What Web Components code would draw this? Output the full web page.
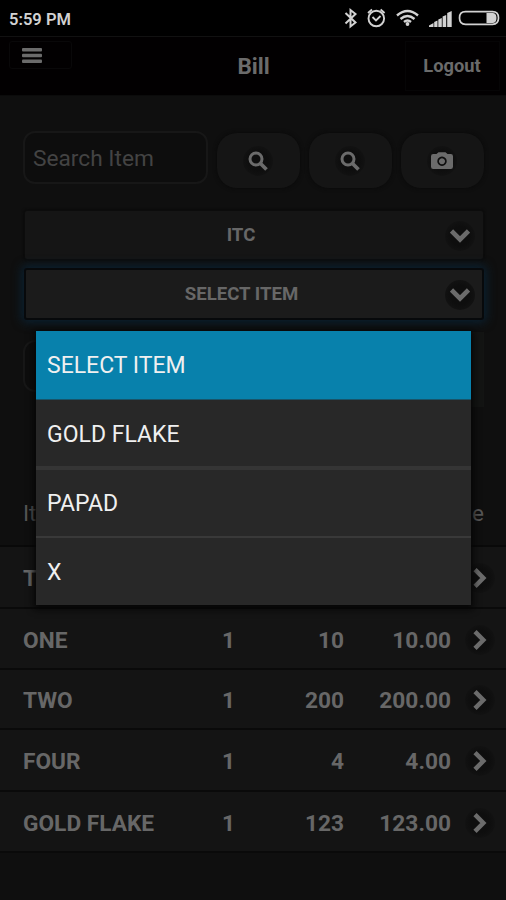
<!DOCTYPE html>
<html lang="en"><head><meta charset="utf-8"><title>Bill</title>
<style>html,body{margin:0;background:#0f0f0f}body{width:506px;height:900px;overflow:hidden;font-family:Roboto,"Liberation Sans",sans-serif}</style></head>
<body><bill-app></bill-app>
<script>
const define=(name,html)=>customElements.define(name,class extends HTMLElement{
  constructor(){super();this.attachShadow({mode:'open'}).innerHTML=html}
});

const icons={
 search:'<svg width="20" height="20" viewBox="0 0 20 20" fill="none" stroke="currentColor"><circle cx="8" cy="8" r="6" stroke-width="3"/><path d="M12 12l6.500 6.500" stroke-width="3.700"/></svg>',
 camera:'<svg width="22" height="18" viewBox="0 0 22 18"><path fill="currentColor" fill-rule="evenodd" d="M2.200 2H5.500L7.500.3h7L16.500 2h3.300Q22 2 22 4.200v10.600Q22 17 19.800 17H2.200Q0 17 0 14.800V4.200Q0 2 2.200 2zM11 4.500a4.700 4.700 0 1 0 .01 0zM11 6.200a3 3 0 1 1-.01 0z"/></svg>',
 down:'<svg width="20" height="14" viewBox="0 0 20 14"><path d="M1.500 2l8.500 8.500L18.500 2" fill="none" stroke="currentColor" stroke-width="4.600"/></svg>',
 right:'<svg width="14" height="20" viewBox="0 0 14 20"><path d="M2 1.700L10.300 10L2 18.300" fill="none" stroke="currentColor" stroke-width="4.500"/></svg>'
};

customElements.define('glyph-disc',class extends HTMLElement{
  connectedCallback(){
    if(this.shadowRoot)return;
    this.attachShadow({mode:'open'}).innerHTML=`<style>:host{display:grid;place-items:center;width:30px;height:30px;border-radius:50%;background:radial-gradient(circle,#0e0e0e 45%,#121212 72%);color:#6b6b6b}svg{display:block}</style>${icons[this.getAttribute('name')]}`;
  }
});

define('status-bar',`<style>
:host{display:flex;box-sizing:border-box;height:37px;padding:0 6px 0 9px;background:#000;border-bottom:1px solid #111;justify-content:space-between;align-items:center;color:#d2d2d2}
b{font-size:16.500px;font-weight:600;line-height:20px;padding-top:3px}svg{display:block}</style>
<b>5:59 PM</b>
<svg width="156" height="24" viewBox="344 6 156 24" fill="none" stroke="currentColor">
<path d="M345.500 13l10 9.500-5 4V10l5 4-10 9.500" stroke-width="2"/>
<circle cx="376.300" cy="18.500" r="7.800" stroke-width="1.900"/><path d="M372.500 17l3.500 3.500 4.500-4.500M368 13l4-3.500M384.600 13l-4-3.500" stroke-width="1.800"/>
<path d="M397 15.500q10.500-9 21 0M400.500 19q7-6 14 0M404 22q3.500-3 7 0" stroke-width="2.400"/><circle cx="407.500" cy="24" r="1.900" fill="currentColor" stroke="none"/>
<g fill="currentColor" stroke="none"><path d="M429 27v-1.500l4.500-2.500v4zM434.200 22l3.300-1.500V27h-3.300zM438.300 19.500l3.500-1.500v9h-3.500zM442.600 16.500l3.600-1.500v12h-3.600zM447.200 13l4.500-2v16h-4.500zM486.500 13h6q4 0 4 5t-4 5h-6z"/></g>
<path d="M465.500 11.700h27q6 0 6 6.300t-6 6.300h-27q-6 0-6-6.300t6-6.300z" stroke-width="1.700"/>
</svg>`);

define('title-bar',`<style>
:host{display:grid;grid-template-columns:101px 1fr 101px;height:59px;background:#020001;color:#6b6b6b;border-bottom:1px solid #0b0b0b;box-sizing:border-box}
.menu{box-sizing:border-box;width:63px;height:28px;margin:4px 0 0 9px;border:1px solid #090809;border-radius:3px;padding:6px 0 0 12px}
.menu svg{display:block}h1{margin:0;align-self:center;text-align:center;font-size:22.500px;line-height:26px;font-weight:700;padding:0 0 1px 1px}
.out{box-sizing:border-box;margin:4px 6px 5px 0;padding-right:1px;border:1px solid #060506;text-align:center;font-size:18.300px;line-height:48px;font-weight:700}</style>
<div class="menu"><svg width="20" height="16" fill="currentColor"><rect width="20" height="3.400" rx="1"/><rect y="5.800" width="20" height="3.400" rx="1"/><rect y="11.600" width="20" height="3.400" rx="1"/></svg></div><h1>Bill</h1><div class="out">Logout</div>`);

define('search-row',`<style>
:host{display:grid;grid-template-columns:185px 83px 83px 83px;column-gap:9px;height:57px}
.in{box-sizing:border-box;height:53px;border:2px solid #171717;border-radius:12px;background:#0d0d0d;color:#434343;font-size:22.700px;line-height:52px;padding-left:8px;white-space:nowrap}
.b{margin-top:2px;height:55px;border-radius:20px;background:#151515;box-shadow:0 0 4px #090909;display:grid;place-items:center}glyph-disc{margin-right:2px}</style>
<div class="in">Search Item</div><div class="b"><glyph-disc name="search"></glyph-disc></div><div class="b"><glyph-disc name="search"></glyph-disc></div><div class="b"><glyph-disc name="camera"></glyph-disc></div>`);

define('drop-select',`<style>
:host{display:grid;grid-template-columns:1fr 30px;align-items:center;box-sizing:border-box;height:50px;border:1px solid #0c0c0c;border-radius:3px;background:#151515;box-shadow:0 0 3px #080808;padding:0 8px 0 12px;color:#676767;font-size:18.600px;font-weight:700;text-align:center;line-height:22px}
:host([active]){height:52px;background:#1b1b1b;border:2px solid #07090b;box-shadow:0 0 10px 3px #0b202f;padding-right:7px}
span{padding-bottom:1px}glyph-disc{margin-top:2px}</style><span><slot></slot></span><glyph-disc name="down"></glyph-disc>`);

define('item-row',`<style>
:host{display:grid;grid-template-columns:180px 32px 109px 107px 14px 30px;align-items:center;box-sizing:border-box;padding:2px 11px 0 23px;background:#141414;border-bottom:2px solid #0a0a0a;color:#676767;font-size:22.700px;font-weight:700;line-height:26px;white-space:nowrap}
.n{text-align:right}.t{padding-top:2px}.g{grid-column:6}</style>
<span class="t"><slot name="name"></slot></span><span class="t n"><slot name="qty"></slot></span><span class="t n"><slot name="rate"></slot></span><span class="t n"><slot name="price"></slot></span><glyph-disc class="g" name="right"></glyph-disc>`);

define('select-popup',`<style>
:host{position:absolute;left:36px;top:331px;width:435px;height:274px;background:#282828;box-shadow:0 2px 7px 2px #050505;color:#f0f0f0;font-size:23px;line-height:26px;display:grid;grid-template-rows:69px 70px 68px 67px}
div{display:flex;align-items:center;box-sizing:border-box;padding:2px 0 0 11px;white-space:nowrap}
.sel{background:#0881ac;border-bottom:1px solid #17546a}.thick{border-bottom:4px solid #353535;padding-top:4px}.thin{border-bottom:2px solid #393939}</style>
<div class="sel">SELECT ITEM</div><div class="thick">GOLD FLAKE</div><div class="thin">PAPAD</div><div>X</div>`);

const row=(n,q,r,p,h)=>`<item-row style="height:${h}px"><span slot="name">${n}</span><span slot="qty">${q}</span><span slot="rate">${r}</span><span slot="price">${p}</span></item-row>`;
define('bill-app',`<style>
:host{display:flex;flex-direction:column;position:relative;width:506px;height:900px;overflow:hidden;background:#0f0f0f}
.form{box-sizing:border-box;height:360px;padding:35px 22px 0 23px;display:flex;flex-direction:column}
drop-select{margin:22px 0 0 1px;width:460px}drop-select[active]{margin-top:8px}
.fields{display:flex;justify-content:space-between;margin-top:12px;height:75px}.field{box-sizing:border-box;margin-top:8px;width:185px;height:52px;border:2px solid #171717;border-radius:12px;background:#0d0d0d}.add{width:185px;background:#131413}
.head{box-sizing:border-box;height:91px;padding:44px 22px 0 23px;display:flex;justify-content:space-between;color:#555;font-size:22.500px;line-height:26px;border-bottom:2px solid #090909}
</style><status-bar></status-bar><title-bar></title-bar>
<div class="form"><search-row></search-row><drop-select>ITC</drop-select><drop-select active>SELECT ITEM</drop-select><div class="fields"><div class="field"></div><div class="add"></div></div></div>
<div class="head"><span>It</span><span>e</span></div>
${row('T','','','',62)}${row('ONE','1','10','10.00',61)}${row('TWO','1','200','200.00',60)}${row('FOUR','1','4','4.00',62)}${row('GOLD FLAKE','1','123','123.00',61)}
<select-popup></select-popup>`);
</script></body></html>
